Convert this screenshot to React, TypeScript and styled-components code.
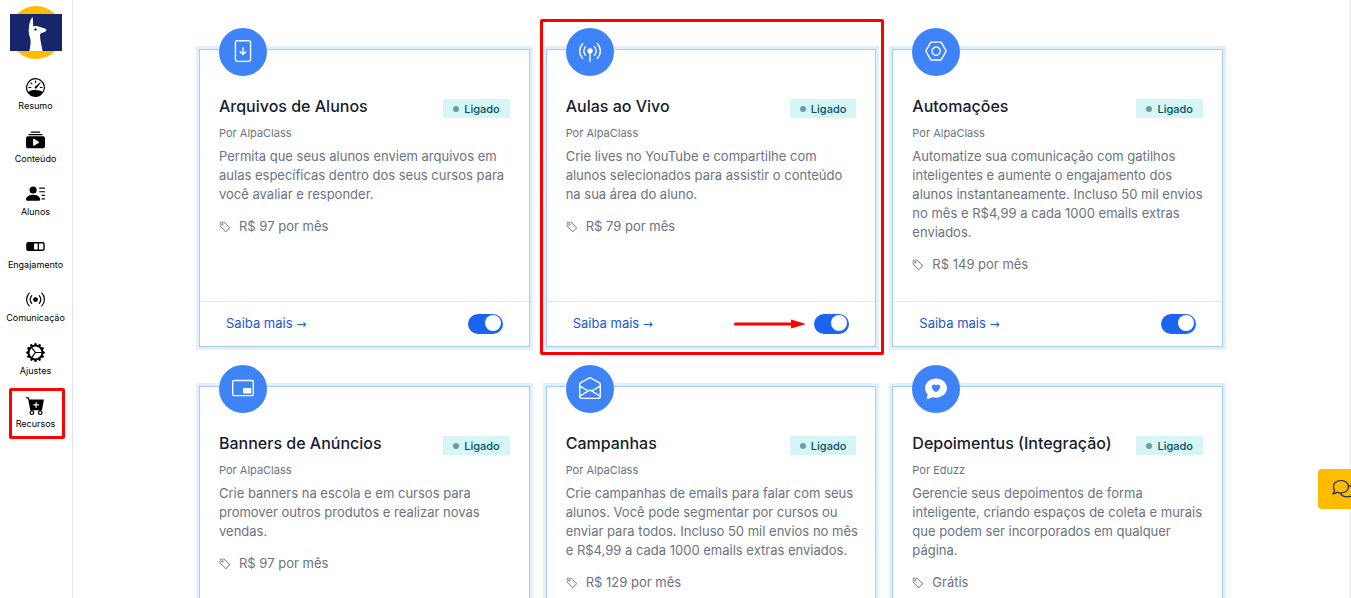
import React from "react";
import styled, { createGlobalStyle } from "styled-components";
import type { IconType } from "react-icons";
import {
  BsBroadcast,
  BsBroadcastPin,
  BsCartPlusFill,
  BsChatHeartFill,
  BsCollectionPlayFill,
  BsEnvelopeOpen,
  BsFileArrowDown,
  BsGearWideConnected,
  BsNut,
  BsPersonLinesFill,
  BsPip,
  BsSpeedometer,
  BsTag,
} from "react-icons/bs";

const GlobalStyle = createGlobalStyle`
  *, *::before, *::after { box-sizing: border-box; }
  body {
    margin: 0;
    background: #fff;
    color: #161e2e;
    font-family: Inter, "Liberation Sans", sans-serif;
  }
  h2, p { margin: 0; }
`;

const Shell = styled.div`
  position: relative;
  display: flex;
  height: 100vh;
  overflow: hidden;
`;

const Sidebar = styled.nav`
  flex: none;
  width: 73px;
  padding-top: 6px;
  border-right: 1px solid #e5e7eb;
  display: flex;
  flex-direction: column;
  align-items: center;
`;

const Logo = styled.svg`
  width: 52px;
  height: 54px;
  margin-bottom: 14px;
`;

const NavLink = styled.a`
  position: relative;
  display: flex;
  flex-direction: column;
  align-items: center;
  width: 100%;
  height: 53px;
  padding: 4px 1px 0 0;
  gap: 3px;
  color: #000;
  font-size: 9px;
  line-height: 12px;
  text-decoration: none;

  svg {
    width: 19px;
    height: 19px;
  }
`;

const NavMark = styled.span`
  position: absolute;
  inset: -4px 7px 6px 9px;
  border: 3px solid #f00;
  border-radius: 2px;
  pointer-events: none;
`;

const Main = styled.main`
  flex: 1;
  min-width: 0;
  padding: 49px 16px 40px;
  border-right: 2px solid #f1f1f1;
  overflow-y: auto;
  scrollbar-width: none;
`;

const Grid = styled.div`
  display: grid;
  grid-template-columns: repeat(3, minmax(0, 1fr));
  gap: 39px 16px;
  max-width: 1024px;
  margin: 0 auto;
`;

const Card = styled.article`
  position: relative;
  display: flex;
  flex-direction: column;
  min-height: 298px;
  border: 1px solid #a4cafe;
  box-shadow: 0 0 0 3px #e1effe;
  background: #fff;
`;

const CardMark = styled.span`
  position: absolute;
  inset: -31px -9px -9px -7px;
  border: 3px solid #f00;
  border-radius: 2px;
  pointer-events: none;
`;

const IconDisc = styled.div`
  position: absolute;
  top: -22px;
  left: 19px;
  display: grid;
  place-items: center;
  width: 48px;
  height: 48px;
  padding-bottom: 2px;
  border-radius: 50%;
  background: #3f83f8;
  color: #fff;

  svg {
    width: 22px;
    height: 22px;
  }
`;

const CardBody = styled.div`
  flex: 1;
  padding: 44px 19px 27px;
`;

const CardHead = styled.header`
  display: flex;
  justify-content: space-between;
  align-items: flex-end;
`;

const Title = styled.h2`
  font-size: 16px;
  line-height: 24px;
  font-weight: 500;
`;

const Badge = styled.span`
  display: flex;
  align-items: center;
  gap: 5px;
  height: 19px;
  padding: 0 10px;
  background: #d5f5f6;
  color: #05505c;
  font-size: 11px;
  font-weight: 500;

  &::before {
    content: "";
    width: 6px;
    height: 6px;
    border-radius: 50%;
    background: #69a0a6;
  }
`;

const Author = styled.p`
  margin-top: 7px;
  color: #6b7280;
  font-size: 11px;
  line-height: 16px;
`;

const Description = styled.p`
  margin: 6px -4px 0 0;
  color: #6b7280;
  font-size: 13px;
  line-height: 19px;
`;

const Price = styled.p`
  display: flex;
  align-items: center;
  gap: 8px;
  margin-top: 13px;
  color: #6b7280;
  font-size: 13px;
  line-height: 19px;

  svg {
    width: 12px;
    height: 12px;
  }
`;

const CardFoot = styled.footer`
  display: flex;
  align-items: center;
  justify-content: space-between;
  height: 45px;
  padding: 0 26px;
  border-top: 1px solid #e5e7eb;
`;

const MoreLink = styled.a`
  color: #1a56db;
  font-size: 13px;
  line-height: 19px;
  text-decoration: none;
`;

const LinkArrow = styled.span`
  font-family: "DejaVu Sans", sans-serif;
  font-size: 12px;
`;

const SwitchWrap = styled.span`
  position: relative;
  display: flex;
`;

const Switch = styled.input`
  appearance: none;
  width: 35px;
  height: 20px;
  margin: 0;
  padding: 1px 2px;
  border-radius: 10px;
  background: #d1d5db;
  cursor: pointer;

  &::before {
    content: "";
    display: block;
    width: 16px;
    height: 16px;
    border-radius: 50%;
    background: #fff;
  }

  &:checked {
    background: #1c64f2;
  }

  &:checked::before {
    margin-left: auto;
  }
`;

const Arrow = styled.svg`
  position: absolute;
  top: 5px;
  right: 43px;
  width: 72px;
  height: 10px;
`;

const ChatButton = styled.button`
  position: absolute;
  right: -17px;
  bottom: 89px;
  width: 50px;
  height: 40px;
  padding: 0 0 0 14px;
  border: 0;
  border-radius: 4px;
  background: #fb0;
  color: #17266b;
  text-align: left;
  cursor: pointer;

  svg {
    display: block;
    width: 23px;
    height: 20px;
  }
`;

const ProgressIcon = () => (
  <svg viewBox="0 0 20 20" aria-hidden="true">
    <rect x="1" y="6" width="18" height="8" rx="1.500" fill="none" stroke="currentColor" strokeWidth="1.500" />
    <path d="M1 6h7.500v8H1zM12.300 6h1.400v8h-1.400z" fill="currentColor" />
  </svg>
);

const AlpacaLogo = () => (
  <Logo viewBox="0 0 52 54" role="img" aria-label="AlpaClass">
    <circle cx="26" cy="26.500" r="26.500" fill="#fb0" />
    <rect y="8" width="52" height="37" fill="#17266b" />
    <path
      d="M22.500 11c1 2.500 0 5.500.8 9.200 2.500-.6 4.700-.2 6.700.9 2 .8 4.500 1 6.300 2.100.5 1.600-1 2.900-3 3.300-2 .3-3.400.9-3.300 2.900.2 5 1.600 10 2.500 15.600H19.400c.8-4.500 1.700-8 1-12-1.200-4-2.200-7-1.500-11C19.400 17.500 20 13.500 22.500 11z"
      fill="#fff"
    />
    <circle cx="25.500" cy="23.500" r="1.200" fill="#17266b" />
  </Logo>
);

interface NavEntry {
  label: string;
  icon: React.ComponentType;
  marked?: boolean;
}

const nav: NavEntry[] = [
  { label: "Resumo", icon: BsSpeedometer },
  { label: "Conteúdo", icon: BsCollectionPlayFill },
  { label: "Alunos", icon: BsPersonLinesFill },
  { label: "Engajamento", icon: ProgressIcon },
  { label: "Comunicação", icon: BsBroadcast },
  { label: "Ajustes", icon: BsGearWideConnected },
  { label: "Recursos", icon: BsCartPlusFill, marked: true },
];

interface Feature {
  title: string;
  author: string;
  text: string;
  price: string;
  icon: IconType;
  marked?: boolean;
}

const features: Feature[] = [
  {
    title: "Arquivos de Alunos",
    author: "AlpaClass",
    text: "Permita que seus alunos enviem arquivos em aulas específicas dentro dos seus cursos para você avaliar e responder.",
    price: "R$ 97 por mês",
    icon: BsFileArrowDown,
  },
  {
    title: "Aulas ao Vivo",
    author: "AlpaClass",
    text: "Crie lives no YouTube e compartilhe com alunos selecionados para assistir o conteúdo na sua área do aluno.",
    price: "R$ 79 por mês",
    icon: BsBroadcastPin,
    marked: true,
  },
  {
    title: "Automações",
    author: "AlpaClass",
    text: "Automatize sua comunicação com gatilhos inteligentes e aumente o engajamento dos alunos instantaneamente. Incluso 50 mil envios no mês e R$4,99 a cada 1000 emails extras enviados.",
    price: "R$ 149 por mês",
    icon: BsNut,
  },
  {
    title: "Banners de Anúncios",
    author: "AlpaClass",
    text: "Crie banners na escola e em cursos para promover outros produtos e realizar novas vendas.",
    price: "R$ 97 por mês",
    icon: BsPip,
  },
  {
    title: "Campanhas",
    author: "AlpaClass",
    text: "Crie campanhas de emails para falar com seus alunos. Você pode segmentar por cursos ou enviar para todos. Incluso 50 mil envios no mês e R$4,99 a cada 1000 emails extras enviados.",
    price: "R$ 129 por mês",
    icon: BsEnvelopeOpen,
  },
  {
    title: "Depoimentus (Integração)",
    author: "Eduzz",
    text: "Gerencie seus depoimentos de forma inteligente, criando espaços de coleta e murais que podem ser incorporados em qualquer página.",
    price: "Grátis",
    icon: BsChatHeartFill,
  },
];

const FeatureCard = ({ title, author, text, price, icon: Icon, marked }: Feature) => (
  <Card>
    <IconDisc>
      <Icon />
    </IconDisc>
    <CardBody>
      <CardHead>
        <Title>{title}</Title>
        <Badge>Ligado</Badge>
      </CardHead>
      <Author>Por {author}</Author>
      <Description>{text}</Description>
      <Price>
        <BsTag />
        {price}
      </Price>
    </CardBody>
    <CardFoot>
      <MoreLink href="#">
        Saiba mais <LinkArrow>→</LinkArrow>
      </MoreLink>
      <SwitchWrap>
        {marked && (
          <Arrow viewBox="0 0 72 10" aria-hidden="true">
            <path d="M1.500 5H60" stroke="#f00" strokeWidth="3" strokeLinecap="round" />
            <path d="M57 0.500L72 5L57 9.500z" fill="#f00" />
          </Arrow>
        )}
        <Switch type="checkbox" role="switch" defaultChecked aria-label={title} />
      </SwitchWrap>
    </CardFoot>
    {marked && <CardMark />}
  </Card>
);

export default function App() {
  return (
    <>
      <GlobalStyle />
      <Shell>
        <Sidebar>
          <AlpacaLogo />
          {nav.map(({ label, icon: Icon, marked }) => (
            <NavLink key={label} href="#">
              <Icon />
              {label}
              {marked && <NavMark />}
            </NavLink>
          ))}
        </Sidebar>
        <Main>
          <Grid>
            {features.map((feature) => (
              <FeatureCard key={feature.title} {...feature} />
            ))}
          </Grid>
        </Main>
        <ChatButton aria-label="Chat">
          <svg viewBox="0 0 23 20" fill="none" stroke="currentColor" strokeWidth="1.200" strokeLinejoin="round">
            <path d="M9 1.500c4.400 0 7.500 2.700 7.500 6.200S13.400 14 9 14c-1.300 0-2.600-.3-3.700-.8C4 14.200 2.500 14.800.8 14.800c1-1.100 1.700-2.300 1.800-3.500C1.800 10.300 1.500 9 1.500 7.700 1.500 4.200 4.600 1.500 9 1.500z" />
            <path d="M16.500 6.500c3 .7 5 2.900 5 5.500 0 1.300-.4 2.500-1.200 3.400.1 1.200.8 2.300 1.800 3.300-1.700 0-3.200-.6-4.400-1.500-1 .4-2.100.6-3.200.6-2.700 0-5-1.200-6-3.500" />
          </svg>
        </ChatButton>
      </Shell>
    </>
  );
}
